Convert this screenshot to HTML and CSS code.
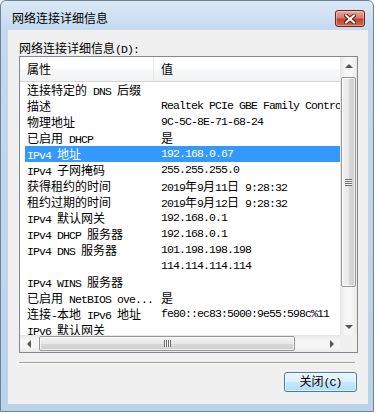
FILE: index.html
```html
<!DOCTYPE html>
<html>
	<head>
		<meta charset="UTF-8">
		<title>网络连接详细信息</title>
		<link rel="stylesheet" href="styles.css">
	</head>
	<body>
		<div class="win">
			<div class="titlebar">
				<span class="title">网络连接详细信息</span>
				<span class="close">
					<svg width="12" height="10" viewBox="0 0 12 10">
						<path d="M2 1.5L10 8.5M10 1.5L2 8.5" stroke="#5c1d12" stroke-width="4" stroke-linecap="square"/>
						<path d="M2 1.5L10 8.5M10 1.5L2 8.5" stroke="#fff" stroke-width="2" stroke-linecap="square"/>
					</svg>
				</span>
			</div>
			<div class="client">
				<div class="label">网络连接详细信息<span class="en">(D):</span></div>
				<div class="listbox">
					<div class="view">
						<div class="head">
							<div class="h1">属性</div>
							<div class="h2">值</div>
						</div>
						<div class="rows">
							<div class="row"><span class="c1">连接特定的<span class="en"> DNS </span>后缀</span><span class="c2"></span></div>
							<div class="row"><span class="c1">描述</span><span class="c2 en">Realtek PCIe GBE Family Controller</span></div>
							<div class="row"><span class="c1">物理地址</span><span class="c2 en">9C-5C-8E-71-68-24</span></div>
							<div class="row"><span class="c1">已启用<span class="en"> DHCP</span></span><span class="c2">是</span></div>
							<div class="row sel"><span class="c1"><span class="en">IPv4 </span>地址</span><span class="c2 en">192.168.0.67</span></div>
							<div class="row"><span class="c1"><span class="en">IPv4 </span>子网掩码</span><span class="c2 en">255.255.255.0</span></div>
							<div class="row"><span class="c1">获得租约的时间</span><span class="c2"><span class="en">2019</span>年<span class="en">9</span>月<span class="en">11</span>日<span class="en"> 9:28:32</span></span></div>
							<div class="row"><span class="c1">租约过期的时间</span><span class="c2"><span class="en">2019</span>年<span class="en">9</span>月<span class="en">12</span>日<span class="en"> 9:28:32</span></span></div>
							<div class="row"><span class="c1"><span class="en">IPv4 </span>默认网关</span><span class="c2 en">192.168.0.1</span></div>
							<div class="row"><span class="c1"><span class="en">IPv4 DHCP </span>服务器</span><span class="c2 en">192.168.0.1</span></div>
							<div class="row"><span class="c1"><span class="en">IPv4 DNS </span>服务器</span><span class="c2 en">101.198.198.198</span></div>
							<div class="row"><span class="c1"></span><span class="c2 en">114.114.114.114</span></div>
							<div class="row"><span class="c1"><span class="en">IPv4 WINS </span>服务器</span><span class="c2"></span></div>
							<div class="row"><span class="c1">已启用<span class="en"> NetBIOS ove...</span></span><span class="c2">是</span></div>
							<div class="row"><span class="c1">连接<span class="en">-</span>本地<span class="en"> IPv6 </span>地址</span><span class="c2 en">fe80::ec83:5000:9e55:598c%11</span></div>
							<div class="row"><span class="c1"><span class="en">IPv6 </span>默认网关</span><span class="c2"></span></div>
						</div>
					</div>
					<div class="vscroll">
						<div class="arrow"><i class="up"></i></div>
						<div class="track">
							<div class="thumb"><i class="grip"></i></div>
						</div>
						<div class="arrow"><i class="down"></i></div>
					</div>
					<div class="hscroll">
						<div class="arrow"><i class="left"></i></div>
						<div class="track">
							<div class="thumb"><i class="grip"></i></div>
						</div>
						<div class="arrow"><i class="right"></i></div>
					</div>
					<div class="corner"></div>
				</div>
				<div class="sep"></div>
				<div class="foot">
					<button class="btn">关闭<span class="en">(C)</span></button>
				</div>
			</div>
		</div>
	</body>
</html>
```

FILE: styles.css
```css
*{
	margin:0;
	padding:0;
	box-sizing:border-box;
}
body{
	background:#fff;
	font-family:"Noto Sans CJK SC", sans-serif;
	font-size:12px;
	color:#000;
}
.en{
	font-family:"Liberation Mono", monospace;
	font-size:11.5px;
	letter-spacing:-0.9px;
}
.win{
	width:374px;
	height:412px;
	border:1px solid #6f8296;
	border-radius:6px 6px 0 0;
	background:linear-gradient(#dbe8f6, #c4d9ef 30px, #bad2ea);
	display:flex;
	flex-direction:column;
}
.titlebar{
	height:29px;
	display:flex;
	justify-content:space-between;
	align-items:flex-start;
	padding:9px 8px 0 11px;
}
.title{
	line-height:16px;
}
.close{
	width:30px;
	height:17px;
	border:1px solid #6b2519;
	border-radius:3px;
	background:linear-gradient(#e9a99a, #d9776a 45%, #c2432f 55%, #cf6a4f);
	box-shadow:inset 0 0 0 1px rgba(255,255,255,.35);
	display:flex;
	align-items:center;
	justify-content:center;
}
.client{
	width:360px;
	height:374px;
	margin-left:7px;
	background:#f0f0f0;
	padding:10px 0 0 11px;
}
.label{
	height:16px;
	line-height:16px;
}
.listbox{
	width:339px;
	height:297px;
	border:1px solid #828790;
	background:#fff;
	display:grid;
	grid-template-columns:320px 17px;
	grid-template-rows:278px 17px;
}
.view{
	overflow:hidden;
}
.head{
	height:25px;
	display:flex;
	background:linear-gradient(#fff, #fff 50%, #f7f8f9 51%, #f1f2f4);
	border-bottom:1px solid #d5d5d5;
	line-height:24px;
}
.h1{
	width:134px;
	padding-left:7px;
	border-right:1px solid #e3e8ee;
}
.h2{
	padding-left:7px;
}
.rows{
	height:253px;
	overflow:hidden;
}
.row{
	margin-left:5px;
	height:16px;
	line-height:16px;
	display:flex;
	white-space:nowrap;
}
.row.sel{
	background:#3399ff;
	color:#fff;
}
.c1{
	width:129px;
	flex:none;
	padding-left:2px;
}
.c2{
	padding-left:7px;
}
.vscroll,.hscroll{
	display:flex;
}
.vscroll{
	flex-direction:column;
	grid-row:1;
	grid-column:2;
	background:linear-gradient(to right, #e6e6e6, #f6f6f6 30%, #f6f6f6 70%, #e9e9e9);
}
.hscroll{
	grid-column:1;
	grid-row:2;
	background:linear-gradient(#e6e6e6, #f6f6f6 30%, #f6f6f6 70%, #e9e9e9);
}
.corner{
	grid-column:2;
	grid-row:2;
	background:#f0f0f0;
}
.arrow{
	width:17px;
	height:17px;
	flex:none;
	display:flex;
	align-items:center;
	justify-content:center;
}
.arrow i{
	display:block;
	width:0;
	height:0;
	border:4px solid transparent;
}
.up{
	border-top:0 !important;
	border-bottom-color:#555 !important;
}
.down{
	border-bottom:0 !important;
	border-top-color:#555 !important;
}
.left{
	border-left:0 !important;
	border-right-color:#555 !important;
}
.right{
	border-right:0 !important;
	border-left-color:#555 !important;
}
.track{
	flex:1;
	display:flex;
}
.vscroll .track{
	flex-direction:column;
	padding:3px 1px 0 1px;
}
.hscroll .track{
	padding:1px 0 1px 2px;
}
.thumb{
	border:1px solid #979797;
	border-radius:2px;
	display:flex;
	align-items:center;
	justify-content:center;
	box-shadow:inset 0 0 0 1px rgba(255,255,255,.7);
}
.vscroll .thumb{
	height:210px;
	background:linear-gradient(to right, #f3f3f3, #e8e8e8 50%, #d9d9d9 51%, #cfcfcf);
}
.hscroll .thumb{
	width:256px;
	background:linear-gradient(#f3f3f3, #e8e8e8 50%, #d9d9d9 51%, #cfcfcf);
}
.grip{
	display:block;
}
.vscroll .grip{
	width:7px;
	height:7px;
	background:repeating-linear-gradient(#6d6d6d 0 1px, #f4f4f4 1px 2px);
}
.hscroll .grip{
	width:7px;
	height:7px;
	background:repeating-linear-gradient(to right, #6d6d6d 0 1px, #f4f4f4 1px 2px);
}
.sep{
	width:336px;
	height:2px;
	margin-top:9px;
	border-top:1px solid #a0a0a0;
	border-bottom:1px solid #fff;
}
.foot{
	display:flex;
	justify-content:flex-end;
	padding:8px 11px 0 0;
}
.btn{
	width:73px;
	height:20px;
	border:1px solid #3c7fb1;
	border-radius:3px;
	background:linear-gradient(#ecf6fd, #dcf0fc 50%, #c7e8fb 51%, #b4dcf4);
	box-shadow:inset 0 0 0 1px rgba(255,255,255,.6);
	font-family:"Noto Sans CJK SC", sans-serif;
	font-size:12px;
	line-height:16px;
	color:#000;
}
```
